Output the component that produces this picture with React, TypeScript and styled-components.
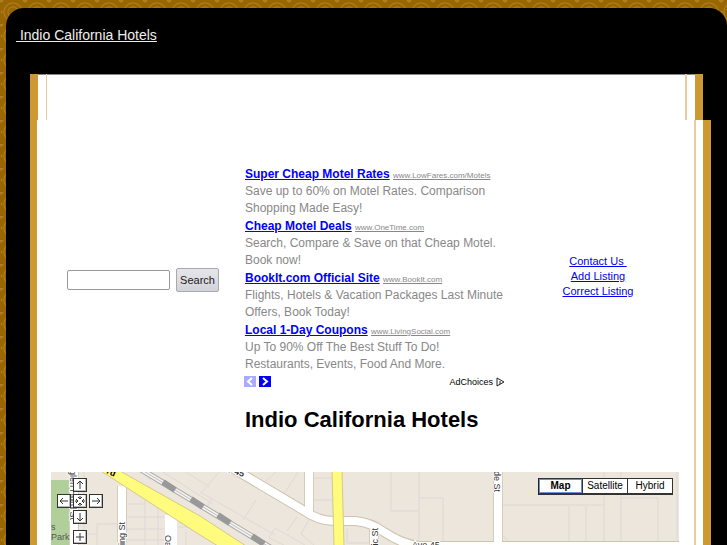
import React from "react";
import styled, { createGlobalStyle } from "styled-components";

const GlobalStyle = createGlobalStyle`
  * { box-sizing: border-box; }
  body {
    margin: 0;
    background-color: #996600;
    background-image:
      radial-gradient(circle at 50% 50%, transparent 4px, #ac7f28 5px, transparent 6px),
      radial-gradient(circle at 50% 50%, transparent 8px, #ae822c 9px, transparent 10px),
      radial-gradient(circle at 0 0, #ac7f28 0 2px, transparent 3px),
      radial-gradient(circle at 100% 0, #ac7f28 0 2px, transparent 3px),
      radial-gradient(circle at 0 50%, #ac7f28 0 1px, transparent 2px);
    background-size: 24px 24px;
    background-position: 1px 0;
    font-family: "Liberation Sans", Arial, sans-serif;
    font-size: 12px;
    color: #000;
  }
  button, input { font-family: inherit; }
`;

const Page = styled.div`
  min-height: 100vh;
  display: flex;
  padding: 8px 0 0 6px;
`;

const Shell = styled.div`
  flex: 1;
  min-width: 0;
  display: flex;
  flex-direction: column;
  background: #000;
  border-radius: 18px 18px 0 0;
`;

const Header = styled.header`
  height: 66px;
  padding: 19px 10px 0;
  line-height: 16px;
`;

const SiteLink = styled.a`
  color: #eee;
  font-size: 14px;
  white-space: pre;
`;

const TopFrame = styled.div`
  height: 46px;
  margin: 0 24px;
  padding: 0 8px;
  background: #fff;
  border: solid #cc9933;
  border-width: 0 8px;
  box-shadow: inset 0 1px #888;
`;

const TopInner = styled.div`
  height: 100%;
  border: solid #e8cda0;
  border-width: 0 2px 0 1px;
`;

const Frame = styled.div`
  flex: 1;
  display: flex;
  margin: 0 16px 0 24px;
  padding-right: 7px;
  background: #fff;
  border: solid #cc9933;
  border-width: 0 8px 0 7px;
`;

const Content = styled.main`
  flex: 1;
  min-width: 0;
  display: flex;
  flex-direction: column;
  padding: 45px 15px 0 14px;
  border-right: 2px solid #e8cda0;
`;

const Columns = styled.div`
  display: grid;
  grid-template-columns: 192px minmax(0, 1fr) 162px;
  align-items: center;
`;

const SearchForm = styled.form`
  display: flex;
  align-items: center;
  gap: 6px;
  padding: 4px 0 0 16px;
`;

const SearchBox = styled.input`
  width: 103px;
  height: 20px;
  padding: 1px 4px;
  border: 1px solid #999;
  border-radius: 2px;
  background: #fff;
`;

const SearchButton = styled.button`
  width: 43px;
  height: 24px;
  padding: 0;
  border: 1px solid #aaa;
  border-radius: 2px;
  background: linear-gradient(#e6e6ea, #d2d3da);
  color: #222;
  font-size: 11px;
`;

const Ads = styled.section`
  width: 262px;
  padding-left: 2px;
`;

const Ad = styled.article`
  height: 52px;
  line-height: 17px;
  color: #888;
  white-space: nowrap;
`;

const AdHead = styled.div`
  height: 18px;
  line-height: 18px;
`;

const AdTitle = styled.a`
  color: #00f;
  font-weight: bold;
`;

const AdUrl = styled.a`
  color: #888;
  font-size: 8px;
`;

const AdFooter = styled.div`
  display: flex;
  align-items: center;
  gap: 3px;
  height: 17px;
  margin: 0 0 0 -1px;
`;

const Pager = styled.button<{ $dim?: boolean }>`
  display: flex;
  width: 12px;
  height: 11px;
  padding: 0;
  border: 0;
  background: ${(p) => (p.$dim ? "#aaaaff" : "#0000ff")};
`;

const AdChoices = styled.a`
  display: flex;
  align-items: center;
  gap: 3px;
  margin-left: auto;
  color: #000;
  font-size: 9px;
  text-decoration: none;
`;

const Links = styled.nav`
  display: flex;
  flex-direction: column;
  align-items: center;
  padding-bottom: 3px;
  line-height: 15px;
  a { color: #0000ee; font-size: 11px; white-space: pre; }
`;

const Title = styled.h1`
  margin: 14px 0 36px 194px;
  font-size: 22px;
  line-height: 32px;
`;

const MapPanel = styled.section`
  flex: 1 0 73px;
  position: relative;
  display: flex;
  overflow: hidden;
  background: #ece6dc;
`;

const MapDrawing = styled.svg`
  position: absolute;
  inset: 0;
  width: 100%;
  height: 100%;
`;

const PanPad = styled.div`
  position: absolute;
  left: 6px;
  top: 6px;
  display: grid;
  grid-template-columns: repeat(3, 14px);
  grid-template-rows: 14px 14px 14px 2px 14px;
  gap: 2px;
`;

const PanButton = styled.button<{ $col: number; $row: number }>`
  grid-column: ${(p) => p.$col};
  grid-row: ${(p) => p.$row};
  display: flex;
  padding: 0;
  border: 1px solid #333;
  background: #fff;
  box-shadow: inset -1px -1px #bbb;
`;

const MapTypes = styled.div`
  position: absolute;
  right: 6px;
  top: 6px;
  display: grid;
  grid-template-columns: 44px 45px 45px;
  height: 17px;
  border-left: 1px solid #222;
`;

const MapType = styled.button<{ $active?: boolean }>`
  padding: 0;
  border: solid #333;
  border-width: 1px 1px 2px 0;
  background: #fff;
  color: #000;
  font-size: 10px;
  line-height: 12px;
  font-weight: ${(p) => (p.$active ? "bold" : "normal")};
  box-shadow: ${(p) => (p.$active ? "inset 0 0 0 1px #6c8fd0" : "none")};
`;

const ads = [
  { title: "Super Cheap Motel Rates", url: "www.LowFares.com/Motels", lines: ["Save up to 60% on Motel Rates. Comparison", "Shopping Made Easy!"] },
  { title: "Cheap Motel Deals", url: "www.OneTime.com", lines: ["Search, Compare & Save on that Cheap Motel.", "Book now!"] },
  { title: "BookIt.com Official Site", url: "www.BookIt.com", lines: ["Flights, Hotels & Vacation Packages Last Minute", "Offers, Book Today!"] },
  { title: "Local 1-Day Coupons", url: "www.LivingSocial.com", lines: ["Up To 90% Off The Best Stuff To Do!", "Restaurants, Events, Food And More."] },
];

const panControls = [
  { label: "Pan up", col: 2, row: 1, d: "M6 10V2M3 5l3-3 3 3" },
  { label: "Pan left", col: 1, row: 2, d: "M10 6H2M5 3L2 6l3 3" },
  { label: "Center map", col: 2, row: 2, d: "M6 1v3M6 8v3M1 6h3M8 6h3M4 2l2 2 2-2M4 10l2-2 2 2M2 4l2 2-2 2M10 4L8 6l2 2" },
  { label: "Pan right", col: 3, row: 2, d: "M2 6h8M7 3l3 3-3 3" },
  { label: "Pan down", col: 2, row: 3, d: "M6 2v8M3 7l3 3 3-3" },
  { label: "Zoom in", col: 2, row: 5, d: "M6 2v8M2 6h8" },
];

const avenue = "M176 -7L252 38Q267 49 283 49H304Q319 50 333 60Q351 72 368 74H640";

function StreetMap() {
  return (
    <MapDrawing viewBox="0 0 628 73" preserveAspectRatio="xMinYMin slice" aria-hidden="true">
      <rect width="628" height="73" fill="#ece6dc" />
      <path d="M0 8h19v65H0z" fill="#b0cf9a" />
      <g fill="none" stroke="#dcdad6">
        <path d="M33 0v73M46 52v21M46 52H67M33 62H46M94 22v51M107 29v44M75 32h19M75 45h38M75 57h38M75 68h38M127 55h28M135 60v13M92 0l8 9M112 0l50 32M135 0l24 15M168 0l-18 21M149 20l75 43M161 26l-5 9M205 28l-13 20M225 0l-11 10M247 0l-14 22M246 45l-10 14M224 56l-6 10 15 7M224 56l30 17M258 48l-8 14 13 11M263 6h20M263 28h20M296 57v14h23" />
        <path d="M340 0v39h28M368 0v68M368 26h24v43M452 33h102M518 34v35M535 34v35M553 0v69M570 0v69M570 26h37v43M626 0v70M452 64l5 4" />
      </g>
      <path d="M86 -5L220 76" stroke="#aaa" strokeWidth="6" />
      <path d="M86 -5L220 76" stroke="#f5f3ef" strokeWidth="4" />
      <path d="M86 -5L220 76" stroke="#bbb" strokeWidth="1" />
      <path d="M112 10L124 18M140 27L152 35M167 43L179 51M201 64L213 72" stroke="#999" strokeWidth="6" />
      <path d="M23 0v73M71 14v60M120 43v31M258 0v40M323 57v20M447 0v75" stroke="#d6ccb8" strokeWidth="10" />
      <path d={avenue} fill="none" stroke="#cdc3ae" strokeWidth="10" />
      <path d="M23 0v73M71 14v60M258 0v40M323 57v20M447 0v75" stroke="#fff" strokeWidth="8" />
      <path d="M120 43v31" stroke="#fff" strokeWidth="12" />
      <path d={avenue} fill="none" stroke="#fff" strokeWidth="8" />
      <path d="M50 -1H69L149 44L195 74H167L149 63Z" fill="#fffb7c" stroke="#d3c98a" />
      <path d="M281 -1H291L293 74H283Z" fill="#fffb7c" stroke="#d3c98a" />
      <g fill="#333" fontSize="9" stroke="#fff" strokeWidth="2" paintOrder="stroke" fontFamily="Liberation Sans, Arial, sans-serif">
        <text transform="translate(19 -2) rotate(90)">glen Hurd St</text>
        <text transform="translate(74 79) rotate(-90)">King St</text>
        <text transform="translate(114 63) rotate(90)">Oasis St</text>
        <text transform="translate(327 78) rotate(-90)">ific St</text>
        <text transform="translate(443 -1) rotate(90)">de St</text>
        <text x="361" y="76">Ave 45</text>
        <text transform="translate(177 0) rotate(18)" fontWeight="bold">r 45</text>
        <text x="0" y="68" stroke="none" fill="#555">Park</text>
        <text x="0" y="58" stroke="none" fill="#555">s</text>
      </g>
      <text transform="translate(55 1) rotate(24)" fontSize="9" fontWeight="bold" fontFamily="Liberation Sans, Arial, sans-serif">rd</text>
    </MapDrawing>
  );
}

export default function App() {
  return (
    <>
      <GlobalStyle />
      <Page>
        <Shell>
          <Header><SiteLink href="#">{" Indio California Hotels"}</SiteLink></Header>
          <TopFrame><TopInner /></TopFrame>
          <Frame>
            <Content>
              <Columns>
                <SearchForm onSubmit={(e) => e.preventDefault()}>
                  <SearchBox type="text" aria-label="Search listings" />
                  <SearchButton type="submit">Search</SearchButton>
                </SearchForm>
                <Ads>
                  {ads.map((ad) => (
                    <Ad key={ad.title}>
                      <AdHead><AdTitle href="#">{ad.title}</AdTitle> <AdUrl href="#">{ad.url}</AdUrl></AdHead>
                      {ad.lines.map((line) => <div key={line}>{line}</div>)}
                    </Ad>
                  ))}
                  <AdFooter>
                    <Pager $dim aria-label="Previous ads"><svg width="12" height="11"><path d="M8 2L4 5.500l4 3.500" fill="none" stroke="#fff" strokeWidth="2" /></svg></Pager>
                    <Pager aria-label="Next ads"><svg width="12" height="11"><path d="M4 2l4 3.500-4 3.500" fill="none" stroke="#fff" strokeWidth="2" /></svg></Pager>
                    <AdChoices href="#">AdChoices
                      <svg width="9" height="10"><path d="M1 1l7 4-7 4zM4 4v3" fill="none" stroke="#222" /></svg>
                    </AdChoices>
                  </AdFooter>
                </Ads>
                <Links>
                  <a href="#">{"Contact Us "}</a>
                  <a href="#">Add Listing</a>
                  <a href="#">Correct Listing</a>
                </Links>
              </Columns>
              <Title>Indio California Hotels</Title>
              <MapPanel aria-label="Map of Indio">
                <StreetMap />
                <PanPad>
                  {panControls.map((c) => (
                    <PanButton key={c.label} aria-label={c.label} $col={c.col} $row={c.row}>
                      <svg width="12" height="12"><path d={c.d} fill="none" stroke="#333" /></svg>
                    </PanButton>
                  ))}
                </PanPad>
                <MapTypes>
                  <MapType $active>Map</MapType>
                  <MapType>Satellite</MapType>
                  <MapType>Hybrid</MapType>
                </MapTypes>
              </MapPanel>
            </Content>
          </Frame>
        </Shell>
      </Page>
    </>
  );
}
